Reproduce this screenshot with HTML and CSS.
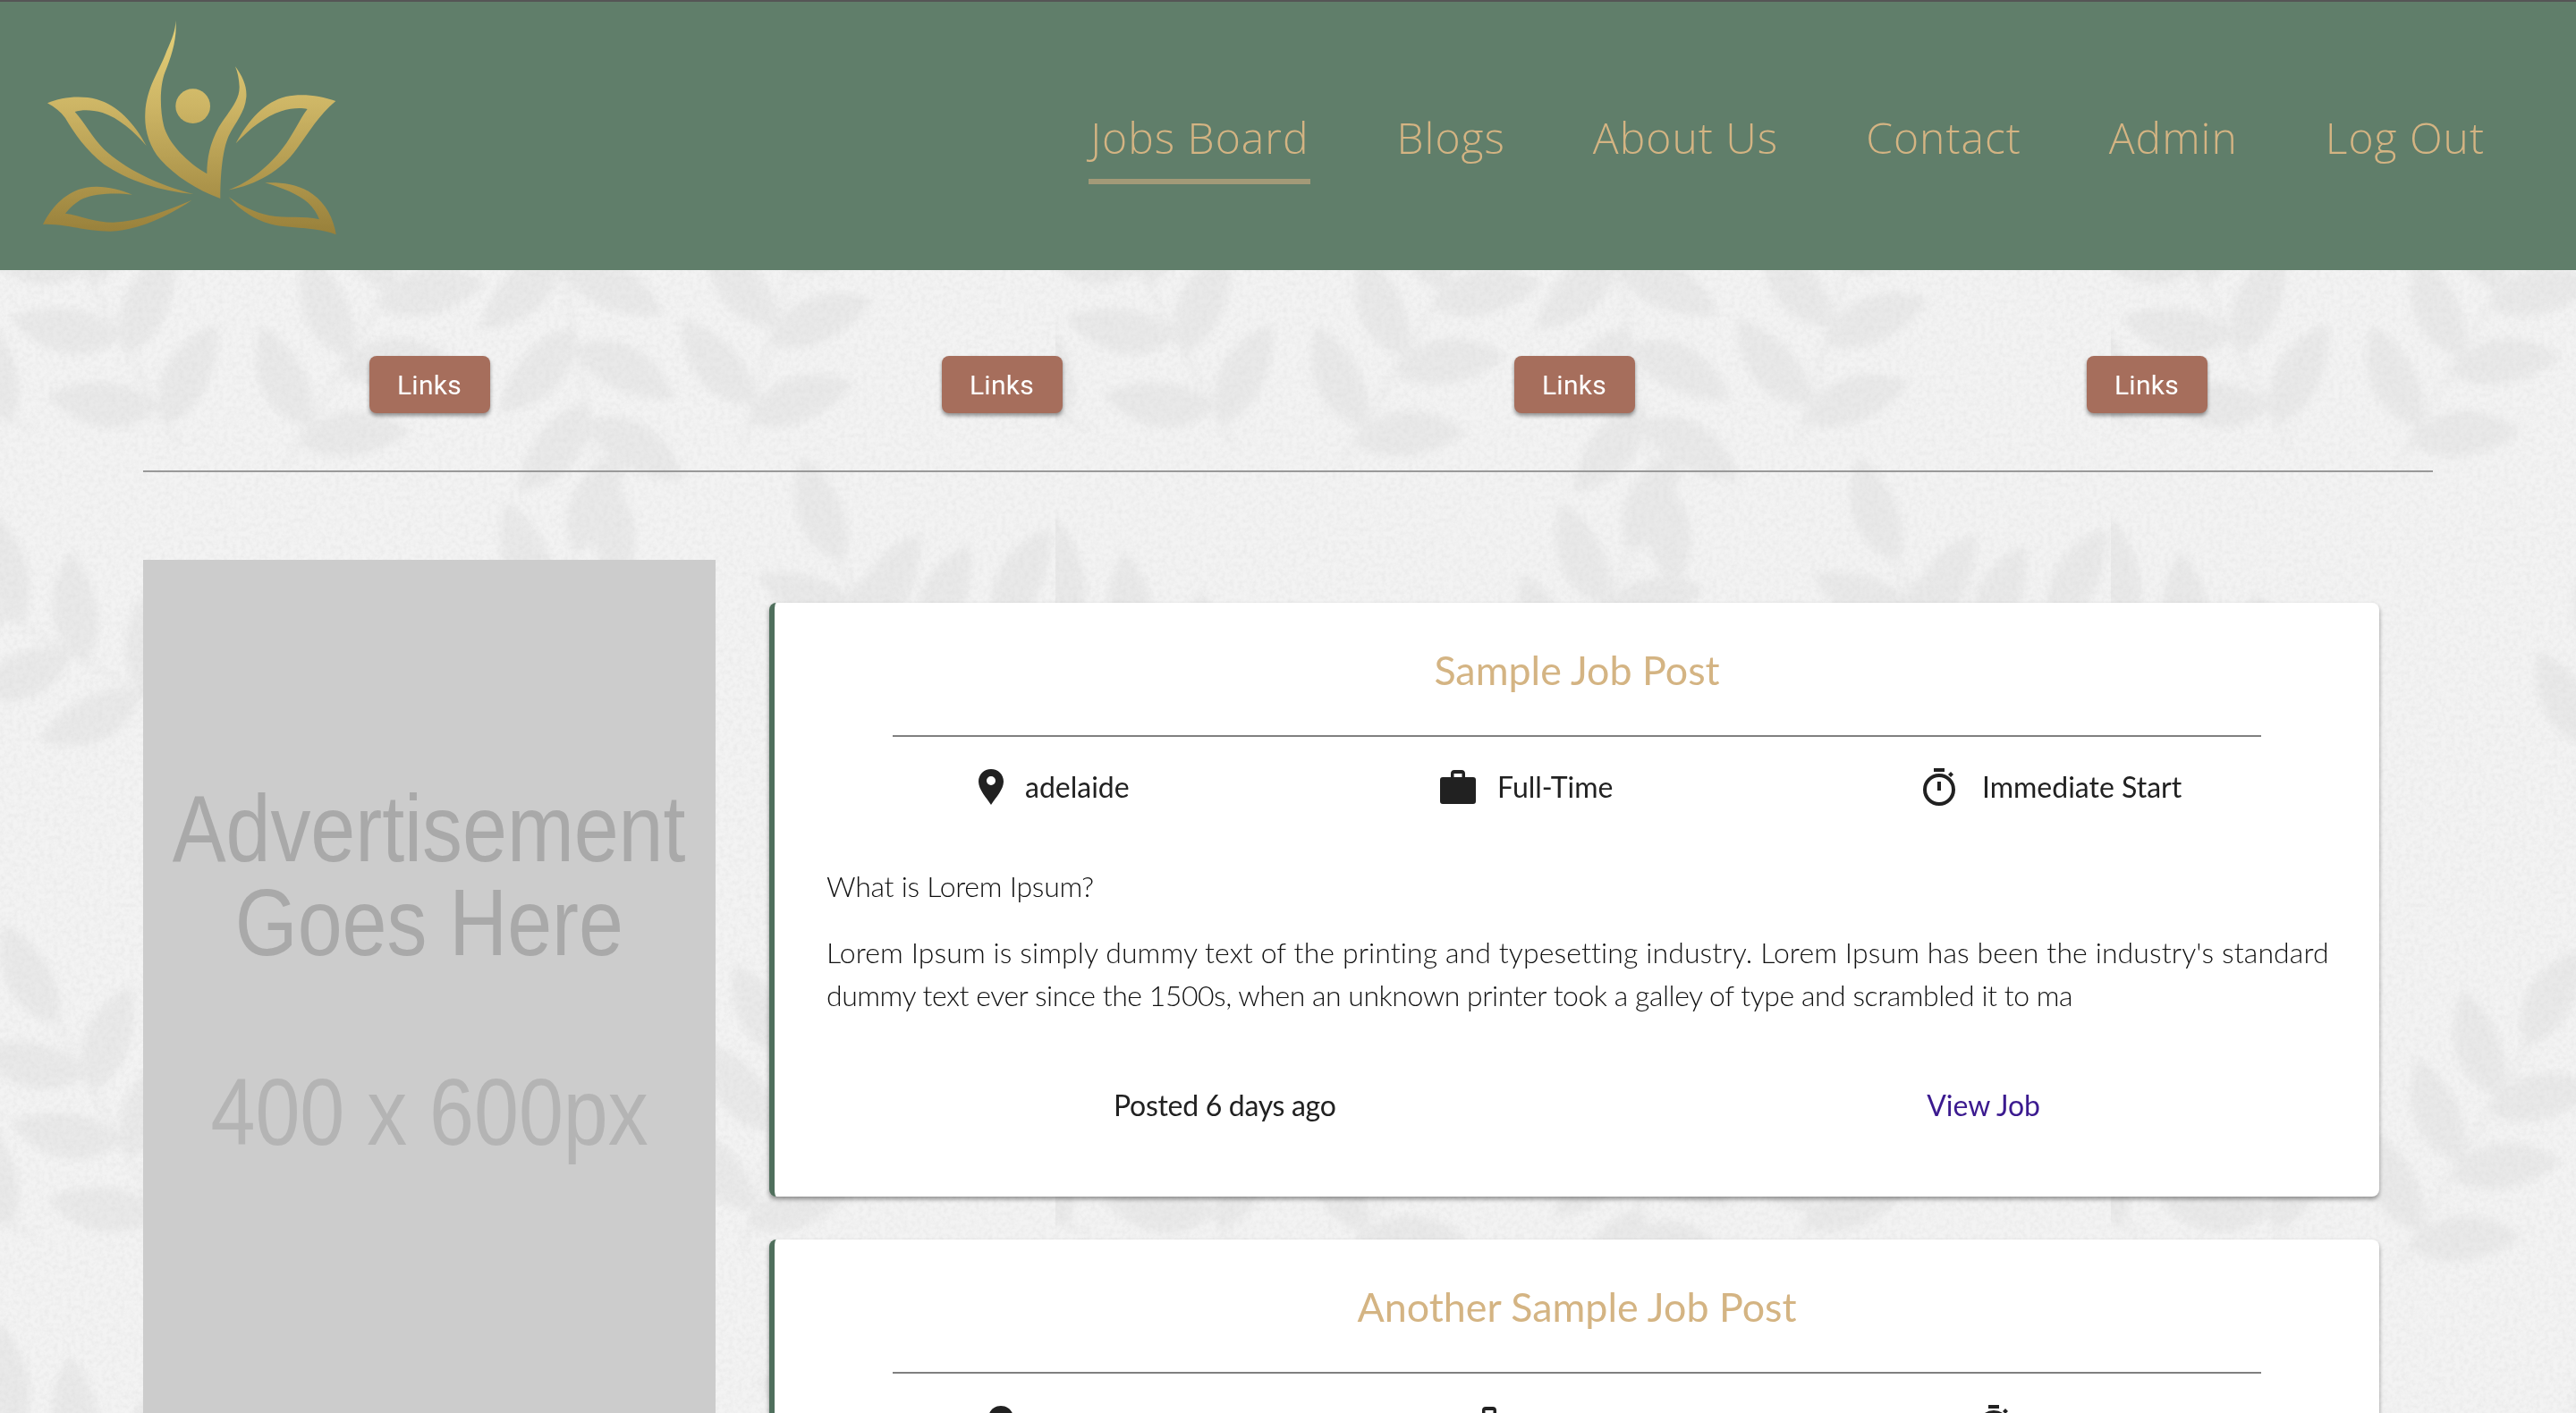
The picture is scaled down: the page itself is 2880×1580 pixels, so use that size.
FILE: index.html
```html
<!DOCTYPE html>
<html lang="en">
<head>
  <meta charset="UTF-8" />
  <meta name="viewport" content="width=device-width, initial-scale=1.0"/>
  <title>Jobs Board</title>
  <link rel="stylesheet" href="styles.css">
</head>
<body>

  <!-- Paper background -->
  <svg class="paper" width="2880" height="1580" aria-hidden="true">
    <defs>
      <path id="leaf" d="M0 0C24-36 80-42 125 0C80 28 24 28 0 0Z"/>
      <g id="sprig">
        <path d="M0 0V-300" fill="none" stroke="#ebebeb" stroke-width="5"/>
        <use href="#leaf" transform="translate(0 -30) rotate(-35)"/>
        <use href="#leaf" transform="translate(0 -50) rotate(-145)"/>
        <use href="#leaf" transform="translate(0 -120) rotate(-38)"/>
        <use href="#leaf" transform="translate(0 -140) rotate(-142)"/>
        <use href="#leaf" transform="translate(0 -205) rotate(-42)"/>
        <use href="#leaf" transform="translate(0 -225) rotate(-138)"/>
        <use href="#leaf" transform="translate(0 -290) rotate(-90)"/>
      </g>
      <filter id="soft"><feGaussianBlur stdDeviation="5"/></filter>
      <filter id="grain" x="0" y="0" width="100%" height="100%">
        <feTurbulence type="fractalNoise" baseFrequency="0.2" numOctaves="3" seed="4"/>
        <feColorMatrix values="0 0 0 0 0.6  0 0 0 0 0.6  0 0 0 0 0.6  0.4 0 0 0 -0.14"/>
      </filter>
      <pattern id="leaves" width="1180" height="900" patternUnits="userSpaceOnUse">
        <g fill="#e9e9e9" filter="url(#soft)">
          <use href="#sprig" transform="translate(200 500) rotate(-28)"/>
          <use href="#sprig" transform="translate(40 480) rotate(-70)"/>
          <use href="#sprig" transform="translate(320 520) rotate(30)"/>
          <use href="#sprig" transform="translate(620 250) rotate(170)"/>
          <use href="#sprig" transform="translate(830 500) rotate(15)"/>
          <use href="#sprig" transform="translate(1040 900) rotate(-20)"/>
          <use href="#sprig" transform="translate(520 880) rotate(25)"/>
          <use href="#sprig" transform="translate(200 800) rotate(-60)"/>
          <use href="#sprig" transform="translate(900 760) rotate(75)"/>
        </g>
      </pattern>
    </defs>
    <rect width="2880" height="1580" fill="#f3f3f3"/>
    <rect width="2880" height="1580" fill="url(#leaves)"/>
    <rect width="2880" height="1580" filter="url(#grain)"/>
  </svg>

  <header class="site-header">
    <svg class="logo" viewBox="130 50 1020 750" width="340" height="250" role="img" aria-label="Lotus logo">
      <defs>
        <linearGradient id="gold" gradientUnits="userSpaceOnUse" x1="0" y1="68" x2="0" y2="786">
          <stop offset="0" stop-color="#e6d27a"/>
          <stop offset="0.4" stop-color="#cdb565"/>
          <stop offset="1" stop-color="#98803a"/>
        </linearGradient>
      </defs>
      <g fill="url(#gold)">
        <circle cx="648" cy="355" r="58"/>
        <path d="M590 68C596 130 575 190 555 240C535 290 538 370 550 420C565 480 630 545 695 582C695 530 705 480 735 425C765 375 805 340 804 290C803 265 798 240 790 222C815 255 830 290 827 325C823 375 790 410 768 455C748 500 740 580 740 665C660 635 590 590 540 535C500 490 485 430 488 380C492 290 535 240 560 170C578 130 590 100 590 68Z"/>
        <path d="M160 345C205 325 270 318 325 332C395 352 450 410 492 488C450 440 400 395 345 377C310 367 275 367 252 374C285 410 310 460 350 500C420 565 530 620 650 650C540 640 430 605 350 550C290 505 250 445 220 395C205 375 185 358 160 345Z"/>
        <path d="M1127 338C1075 320 1015 312 960 323C890 340 835 400 792 480C840 430 890 390 945 372C975 362 1010 360 1032 365C1005 400 985 450 950 495C905 555 840 610 768 636C860 620 945 570 995 500C1040 440 1070 385 1127 338Z"/>
        <path d="M145 752C175 690 225 640 290 628C345 620 395 632 445 652C390 645 320 648 280 665C255 677 235 697 220 715C270 722 320 745 380 745C470 742 560 705 645 670C570 720 470 772 370 775C290 775 210 748 145 752Z"/>
        <path d="M1128 786C1118 720 1085 670 1035 640C990 615 940 610 890 612C950 630 1000 650 1035 680C1052 697 1065 715 1072 735C1020 722 960 732 905 722C855 712 810 690 768 660C815 715 880 752 950 758C1010 765 1075 765 1128 786Z"/>
      </g>
    </svg>
    <nav class="main-nav">
      <a class="active" href="#">Jobs Board</a>
      <a href="#">Blogs</a>
      <a href="#">About Us</a>
      <a href="#">Contact</a>
      <a href="#">Admin</a>
      <a href="#">Log Out</a>
    </nav>
  </header>

  <div class="link-row">
    <div class="link-cell"><a class="link-btn" href="#">Links</a></div>
    <div class="link-cell"><a class="link-btn" href="#">Links</a></div>
    <div class="link-cell"><a class="link-btn" href="#">Links</a></div>
    <div class="link-cell"><a class="link-btn" href="#">Links</a></div>
  </div>

  <hr class="page-rule">

  <main class="content">
    <aside class="ad">
      <span class="ad-line">Advertisement</span>
      <span class="ad-line">Goes Here</span>
      <span class="ad-line ad-size">400 x 600px</span>
    </aside>

    <section class="jobs">
      <article class="job-card">
        <h2 class="job-title">Sample Job Post</h2>
        <hr class="job-rule">
        <div class="job-meta">
          <div class="meta-item">
            <svg class="icon-pin" viewBox="0 0 28 40" width="28" height="40"><path fill-rule="evenodd" d="M14 0C6 0 0 6 0 14C0 23 9 32 14 40C19 32 28 23 28 14C28 6 22 0 14 0ZM14 8A5 5 0 1 1 14 18A5 5 0 1 1 14 8Z"/></svg>
            <span>adelaide</span>
          </div>
          <div class="meta-item">
            <svg class="icon-case" viewBox="0 0 40 38" width="40" height="38"><path fill-rule="evenodd" d="M12 8V4C12 1.500 13.500 0 16 0H24C26.500 0 28 1.500 28 4V8H37C39 8 40 9 40 11V35C40 37 39 38 37 38H3C1 38 0 37 0 35V11C0 9 1 8 3 8ZM15.500 8H24.500V4H15.500Z"/></svg>
            <span>Full-Time</span>
          </div>
          <div class="meta-item">
            <svg class="icon-clock" viewBox="0 0 36 42" width="36" height="42"><path d="M12 0H24V4H12ZM16 15H20V25H16ZM28 7L31 4L34 7L31 10Z"/><circle cx="18" cy="24" r="16" fill="none" stroke="#212121" stroke-width="4"/></svg>
            <span class="meta-clock">Immediate Start</span>
          </div>
        </div>
        <div class="job-desc">
          <p class="desc-lead">What is Lorem Ipsum?</p>
          <p><span class="desc-first">Lorem Ipsum is simply dummy text of the printing and typesetting industry. Lorem Ipsum has been the industry's standard</span> <span class="desc-second">dummy text ever since the 1500s, when an unknown printer took a galley of type and scrambled it to ma</span></p>
        </div>
        <div class="job-foot">
          <span class="job-posted">Posted 6 days ago</span>
          <a href="#">View Job</a>
        </div>
      </article>

      <article class="job-card job-card-next">
        <h2 class="job-title">Another Sample Job Post</h2>
        <hr class="job-rule">
        <div class="job-meta">
          <div class="meta-item">
            <svg class="icon-pin" viewBox="0 0 28 40" width="28" height="40"><path fill-rule="evenodd" d="M14 0C6 0 0 6 0 14C0 23 9 32 14 40C19 32 28 23 28 14C28 6 22 0 14 0ZM14 8A5 5 0 1 1 14 18A5 5 0 1 1 14 8Z"/></svg>
          </div>
          <div class="meta-item">
            <svg class="icon-case" viewBox="0 0 40 38" width="40" height="38"><path fill-rule="evenodd" d="M12 8V4C12 1.500 13.500 0 16 0H24C26.500 0 28 1.500 28 4V8H37C39 8 40 9 40 11V35C40 37 39 38 37 38H3C1 38 0 37 0 35V11C0 9 1 8 3 8ZM15.500 8H24.500V4H15.500Z"/></svg>
          </div>
          <div class="meta-item">
            <svg class="icon-clock" viewBox="0 0 36 42" width="36" height="42"><path d="M12 0H24V4H12ZM16 15H20V25H16ZM28 7L31 4L34 7L31 10Z"/><circle cx="18" cy="24" r="16" fill="none" stroke="#212121" stroke-width="4"/></svg>
          </div>
        </div>
      </article>
    </section>
  </main>

</body>
</html>
```

FILE: styles.css
```css
* {
  box-sizing: border-box;
}

html, body {
  height: 100%;
  overflow: hidden;
}

body {
  margin: 0;
  font-family: 'Lato', sans-serif;
  color: #212121;
}

.paper {
  position: fixed;
  top: 0;
  left: 0;
  z-index: -1;
}

/* Header */
.site-header {
  height: 302px;
  display: flex;
  justify-content: space-between;
  align-items: flex-start;
  background: #607e6a;
  border-top: 2px solid #555;
  padding-right: 100px;
}

.logo {
  margin: 15px 0 0 43px;
}

.main-nav {
  display: flex;
  gap: 94px;
  margin-top: 122px;
}

.main-nav a {
  font-family: 'Open Sans', sans-serif;
  font-weight: 300;
  font-size: 48px;
  line-height: 60px;
  letter-spacing: 1px;
  color: #d4b483;
  text-decoration: none;
  padding: 0 2px 16px;
  border-bottom: 6px solid transparent;
}

.main-nav a.active {
  border-bottom-color: #a39a78;
}

/* Links row */
.link-row {
  display: grid;
  grid-template-columns: repeat(4, 640px);
  margin: 96px 160px 0;
}

.link-cell {
  display: flex;
  justify-content: center;
}

.link-btn {
  width: 135px;
  height: 64px;
  display: flex;
  align-items: center;
  justify-content: center;
  background: #a66e5c;
  color: #fff;
  font-family: 'Roboto', sans-serif;
  font-size: 30px;
  letter-spacing: 0.3px;
  text-decoration: none;
  border-radius: 8px;
  box-shadow: 0 3px 4px rgba(0,0,0,0.4);
}

.page-rule {
  height: 2px;
  margin: 64px 160px 0;
  border: none;
  background: #999;
}

/* Main columns */
.content {
  display: grid;
  grid-template-columns: 640px 1fr;
  margin: 98px 160px 0;
}

.ad {
  height: 960px;
  padding-top: 248px;
  display: flex;
  flex-direction: column;
  align-items: center;
  background: #ccc;
  font-family: 'Liberation Sans', sans-serif;
  font-size: 105px;
  line-height: 105px;
  color: #a9a9a9;
}

.ad-line {
  white-space: nowrap;
  transform: scaleX(0.855);
}

.ad-size {
  margin-top: 107px;
  color: #b4b4b4;
}

.jobs {
  padding: 48px 60px 0;
}

/* Job cards */
.job-card {
  height: 664px;
  margin-bottom: 48px;
  padding-top: 45px;
  background: #fff;
  border-left: 6px solid #4f6f5c;
  border-radius: 8px;
  box-shadow: 0 3px 5px rgba(0,0,0,0.4);
}

.job-title {
  margin: 0;
  font-size: 44.8px;
  font-weight: 400;
  line-height: 60px;
  text-align: center;
  color: #d4b483;
}

.job-rule {
  height: 2px;
  margin: 43px 132px 0;
  border: none;
  background: #808080;
}

.job-meta {
  display: grid;
  grid-template-columns: 516px 540px 1fr;
  margin: 32px 132px 0;
  padding-left: 96px;
  font-size: 32px;
  line-height: 48px;
}

.job-card-next .job-meta {
  grid-template-columns: 540px 566px 1fr;
  padding-left: 107px;
}

.meta-item {
  display: flex;
  align-items: center;
  gap: 24px;
  height: 48px;
}

.meta-item svg {
  fill: #212121;
  flex: none;
}

.meta-clock {
  margin-left: 6px;
}

.job-desc {
  margin: 63px 50px 0 58px;
  font-size: 32px;
  font-weight: 300;
  line-height: 48px;
  color: #111;
}

.job-desc p {
  margin: 0 0 26px;
}

.desc-lead {
  letter-spacing: -0.27px;
}

.desc-first {
  letter-spacing: 0.1px;
}

.desc-second {
  letter-spacing: -0.47px;
}

.job-foot {
  display: flex;
  justify-content: space-between;
  margin-top: 75px;
  padding: 0 379px;
  font-size: 32px;
  line-height: 48px;
}

.job-posted {
  letter-spacing: -0.3px;
}

.job-foot a {
  color: #3b1a8f;
  text-decoration: none;
}
```
